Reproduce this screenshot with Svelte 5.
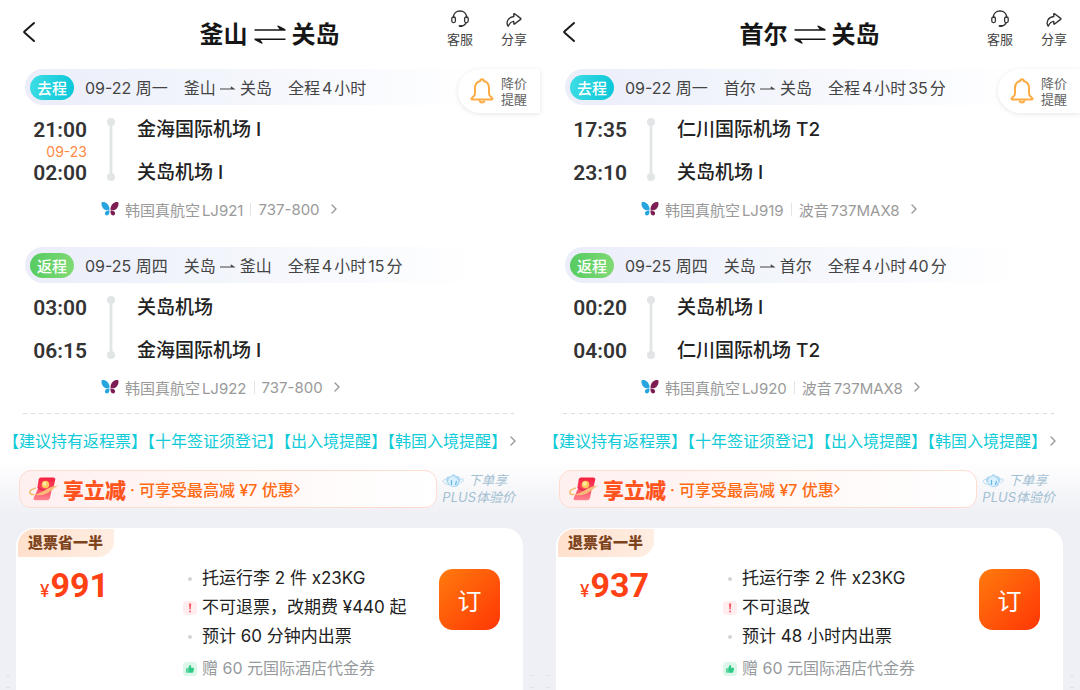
<script>
  const panels = [
    {
      id: 'pusan',
      from: '釜山',
      to: '关岛',
      legs: [
        { kind: 'out', label: '去程', date: '09-22 周一', from: '釜山', to: '关岛', total: '全程4小时', depart: '21:00', nextDay: '09-23', arrive: '02:00', fromPort: '金海国际机场 I', toPort: '关岛机场 I', flight: '韩国真航空LJ921', plane: '737-800' },
        { kind: 'back', label: '返程', date: '09-25 周四', from: '关岛', to: '釜山', total: '全程4小时15分', depart: '03:00', nextDay: '', arrive: '06:15', fromPort: '关岛机场', toPort: '金海国际机场 I', flight: '韩国真航空LJ922', plane: '737-800' }
      ],
      price: '991',
      rules: ['托运行李 2 件 x23KG', '不可退票，改期费 ¥440 起', '预计 60 分钟内出票']
    },
    {
      id: 'seoul',
      from: '首尔',
      to: '关岛',
      legs: [
        { kind: 'out', label: '去程', date: '09-22 周一', from: '首尔', to: '关岛', total: '全程4小时35分', depart: '17:35', nextDay: '', arrive: '23:10', fromPort: '仁川国际机场 T2', toPort: '关岛机场 I', flight: '韩国真航空LJ919', plane: '波音737MAX8' },
        { kind: 'back', label: '返程', date: '09-25 周四', from: '关岛', to: '首尔', total: '全程4小时40分', depart: '00:20', nextDay: '', arrive: '04:00', fromPort: '关岛机场 I', toPort: '仁川国际机场 T2', flight: '韩国真航空LJ920', plane: '波音737MAX8' }
      ],
      price: '937',
      rules: ['托运行李 2 件 x23KG', '不可退改', '预计 48 小时内出票']
    }
  ];
</script>

{#snippet chevron()}
  <svg class="chevron" viewBox="0 0 6 10" width="6" height="10"><path d="M1 1l4 4-4 4" fill="none" stroke="currentColor" stroke-width="1.4" stroke-linecap="round" stroke-linejoin="round" /></svg>
{/snippet}

<main>
  {#each panels as p (p.id)}
    <section class="panel">
      <header>
        <button class="back" aria-label="返回">
          <svg viewBox="0 0 14 22" width="14" height="22"><path d="M12 2L2.4 10.6q-.5.4 0 .8L12 20" fill="none" stroke="#1c1c1c" stroke-width="2" stroke-linecap="round" stroke-linejoin="round" /></svg>
        </button>
        <h1>
          <span>{p.from}</span>
          <svg viewBox="0 0 32 20" width="32" height="20" fill="#161616"><path d="M.5 4.300h25L23 .8h1.800l6.700 3.500v1.400H.5zM31.500 13.500H.5v1.400l6.700 3.500H9l-2.500-3.500h25z" /></svg>
          <span>{p.to}</span>
        </h1>
        <nav>
          <button class="tool">
            <svg viewBox="0 0 18 18" width="18" height="18" fill="none" stroke="#333" stroke-width="1.3" stroke-linecap="round">
              <path d="M2.400 7.500C2.400 3.500 5.200 1 9 1s6.600 2.500 6.600 6.500M15 12.800c-.7 2-2.400 3-4.300 3.200" />
              <rect x=".8" y="7" width="3.600" height="5.600" rx="1.500" />
              <rect x="13.600" y="7" width="3.600" height="5.600" rx="1.500" />
              <path d="M8.600 16h2" stroke-width="2" />
            </svg>
            <span>客服</span>
          </button>
          <button class="tool">
            <svg viewBox="0 0 18 18" width="18" height="18" fill="none" stroke="#333" stroke-width="1.400" stroke-linejoin="round" stroke-linecap="round">
              <path d="M8.800 4.200q0-.9.8-.4l6 4.600q.6.500 0 1l-6 4.600q-.8.500-.8-.4v-2.200C6 11.600 4.800 13 3.500 15.800q-.4.600-.7 0C.9 12 3 7.200 8.800 6.500z" />
            </svg>
            <span>分享</span>
          </button>
        </nav>
      </header>

      {#each p.legs as leg (leg.kind)}
        <article class="leg">
          <div class="row">
            <div class="band">
              <span class="badge {leg.kind}">{leg.label}</span>
              <span>{leg.date}</span>
              <span class="route">
                {leg.from}
                <svg viewBox="0 0 16 8" width="16" height="8" fill="#444"><path d="M0 5.600h10.800V3.200l4.800 3.400H0z" /></svg>
                {leg.to}
              </span>
              <span>{leg.total}</span>
            </div>
            {#if leg.kind === 'out'}
              <button class="alert">
                <svg viewBox="0 0 24 26" width="24" height="26" fill="none" stroke="#ffab45" stroke-width="2" stroke-linecap="round" stroke-linejoin="round">
                  <path d="M10.300 3q0-1.800 1.700-1.800T13.700 3c3.400.8 5.300 3.600 5.300 7v5.500c0 2 1.300 2.800 3 4.300q1.300 1.700-.6 1.700H2.600q-1.900 0-.6-1.700c1.700-1.500 3-2.300 3-4.300V10c0-3.400 1.900-6.200 5.300-7z" />
                  <path d="M9.700 23.300q2.300 2.400 4.600 0" />
                </svg>
                <span>降价<br />提醒</span>
              </button>
            {/if}
          </div>

          <div class="times">
            <time>{leg.depart}</time>
            <svg class="track" viewBox="0 0 8 63" width="8" height="63" fill="#e1e5e6"><circle cx="4" cy="4" r="4" /><circle cx="4" cy="59" r="4" /><path d="M2.600 4h2.800v55H2.600z" /></svg>
            <b class="first">{leg.fromPort}</b>
            {#if leg.nextDay}<small>{leg.nextDay}</small>{/if}
            <time class="arrive">{leg.arrive}</time>
            <b class="last">{leg.toPort}</b>
          </div>

          <a class="flight" href="#{p.id}-{leg.kind}">
            <svg viewBox="0 0 18 16" width="18" height="16">
              <path d="M.6 1.400C3.600.4 7.600 2 8.600 8.200 7.800 9.600 4.500 9.800 2.700 8 .9 6.200.1 3.600.6 1.400z" fill="#28a4df" />
              <path d="M8.400 9.200c.4 2.800-.5 5.300-2.700 5.200-1.700-.2-2.300-2-1.400-3.400.8-1.200 2.400-1.300 4.100-1.800z" fill="#28a4df" />
              <path d="M17.400 1.400c-3-1-7 .6-8 6.800.8 1.400 4.100 1.600 5.900-.2 1.800-1.800 2.600-4.400 2.100-6.600z" fill="#7c1d54" />
              <path d="M9.600 9.200c-.4 2.800.5 5.300 2.700 5.200 1.700-.2 2.300-2 1.400-3.400-.8-1.200-2.400-1.300-4.100-1.800z" fill="#7c1d54" />
            </svg>
            <span>{leg.flight}</span>
            <i></i>
            <span>{leg.plane}</span>
            {@render chevron()}
          </a>
        </article>
      {/each}

      <svg class="dashes" width="100%" height="1"><line x1="0" y1="0.5" x2="100%" y2="0.5" stroke="#d9dbdd" stroke-dasharray="4 4" /></svg>

      <a class="notice" href="#{p.id}-notice">
        <span>【建议持有返程票】【十年签证须登记】【出入境提醒】【韩国入境提醒】</span>
        {@render chevron()}
      </a>

      <div class="lower">
        <div class="offers">
          <button class="promo">
            <svg viewBox="0 0 32 26" width="32" height="26">
              <defs>
                <linearGradient id="env-{p.id}" x1="0" y1="0" x2="0" y2="1"><stop offset="0" stop-color="#f5203c" /><stop offset=".5" stop-color="#fa4661" /><stop offset="1" stop-color="#ff8790" /></linearGradient>
              </defs>
              <path d="M8 12C0 14 0 19 6 18.500" fill="none" stroke="#f7bd72" stroke-width="1.600" />
              <path d="M13 1.500h12q2.800 0 2.200 2.500l-1.400 6q-.5 2-2 3l-1.800 9q-.6 2.300-3 2.300H7.500q-3 0-1.600-2.700l4-8.600-.4-2.500 1.200-7q.4-2 2.300-2z" fill="url(#env-{p.id})" />
              <path d="M10 11c2 3 8 4.500 14 2" fill="none" stroke="#e9284b" stroke-width="1.400" />
              <path d="M5 18.500C14 18.500 19 10 31 9.500c-5 1-9 8.500-17 9.500q-5 .8-9-.5z" fill="#f9bc78" />
              <circle cx="17.500" cy="8.500" r="3.800" fill="#ffc65a" /><circle cx="16.700" cy="7.700" r="2" fill="#ffe9a5" />
            </svg>
            <strong>享立减</strong>
            <span>· 可享受最高减 ¥7 优惠</span>
            {@render chevron()}
          </button>
          <button class="plus">
            <span class="line">
              <svg viewBox="0 0 22 14" width="22" height="14">
                <path d="M5 3l4-1 2.500-2L14 2l3 .5 1.500 4L16 12q-4.500 2-8 0L4 7z" fill="#a9d6f2" />
                <path d="M7 4l4.500-2 4 3 1 3-2.500 4H9L6 8z" fill="#d9f0ff" />
                <path d="M9.500 6v5M13.500 11l1-4" fill="none" stroke="#68b5e6" stroke-width="1.200" />
                <path d="M5 5C-1 6 0 9.500 7 10.500M18 5c5-.5 4 2 .5 4" fill="none" stroke="#acd2ea" stroke-width=".9" />
              </svg>
              下单享
            </span>
            <span>PLUS体验价</span>
          </button>
        </div>

        <div class="shelf">
          <i class="marks"></i>
          <article class="card">
            <div class="fare">
              <span class="tag">退票省一半</span>
              <span class="price"><small>¥</small>{p.price}</span>
            </div>
            <ul>
              <li><i class="dot"></i>{p.rules[0]}</li>
              <li><i class="mark warn"><svg viewBox="0 0 14 14" width="14" height="14"><path d="M6 2.500h2.200L7.700 8.500H6.500zM6.200 9.700h1.700v1.600H6.200z" fill="#f7515a" /></svg></i>{p.rules[1]}</li>
              <li><i class="dot"></i>{p.rules[2]}</li>
              <li class="gift"><i class="mark good"><svg viewBox="0 0 14 14" width="14" height="14" fill="#2fca85"><path d="M3.200 6.300h1.500v4.500H3.200zM5.200 6.200L6.700 3q1.700-.2 1.500 1.600l-.2 1.100h2.200q1.100.1.800 1.200l-.8 3q-.3.900-1.200.9H5.200z" /></svg></i>赠 60 元国际酒店代金券</li>
            </ul>
            <button class="book">订</button>
          </article>
          <i class="marks"></i>
        </div>
      </div>
    </section>
  {/each}
</main>

<style>
  :global(body) { margin: 0; background: #fff; }
  main {
    display: grid;
    grid-template-columns: 1fr 1fr;
    min-height: 100vh;
    font-family: Inter, "Noto Sans CJK SC", sans-serif;
    color: #222;
    text-autospace: normal;
    overflow: hidden;
  }
  button { border: 0; padding: 0; background: none; font: inherit; color: inherit; cursor: pointer; }
  a { color: inherit; text-decoration: none; }
  svg { flex: none; display: block; }
  .panel { display: flex; flex-direction: column; min-width: 0; }

  header { display: grid; grid-template-columns: 1fr auto 1fr; align-items: center; height: 69px; padding: 0 13px 0 22px; }
  .back { justify-self: start; padding-bottom: 6px; }
  h1 { display: flex; align-items: center; gap: 6px; margin: 0; padding-right: 10px; font-size: 24px; line-height: 32px; font-weight: 700; color: #161616; }
  nav { display: flex; justify-self: end; gap: 28px; padding-bottom: 10px; }
  .tool { display: flex; flex-direction: column; align-items: center; gap: 1px; font-size: 13px; line-height: 20px; color: #444; }

  .leg { margin-bottom: 25px; }
  .leg + .leg { margin-bottom: 13px; }
  .row { display: grid; height: 36px; }
  .row > * { grid-area: 1 / 1; }
  .band {
    display: flex; align-items: center; gap: 16px; height: 36px; margin: 0 60px 0 25px; padding-left: 5px;
    border-radius: 18px; background: linear-gradient(90deg, #ebeef9, #f6f8fd 60%, #fff);
    font-size: 16px; color: #444; white-space: nowrap;
  }
  .badge { display: grid; place-items: center; width: 44px; height: 25px; margin-right: -5px; border-radius: 13px; color: #fff; font-size: 15px; font-weight: 500; }
  .badge.out { background: linear-gradient(100deg, #3fdde4, #09c6d8); }
  .badge.back { background: linear-gradient(100deg, #55cb60, #82da76); padding: 0; }
  .route { display: flex; align-items: center; gap: 4px; }
  .alert {
    display: flex; align-items: center; gap: 7px; justify-self: end; align-self: start;
    height: 44px; padding: 0 13px 0 12px; border-radius: 22px 0 0 22px; background: #fff;
    box-shadow: 0 1px 5px #0000001a; font-size: 13px; line-height: 16px; color: #666;
  }

  .times { display: grid; grid-template: 24px 19px 24px / 87px 8px 1fr; column-gap: 20px; padding-top: 13px; align-items: center; }
  .times time { grid-column: 1; grid-row: 1; justify-self: end; font: 600 21px/24px Roboto, sans-serif; color: #333; }
  .times .arrive { grid-row: 3; }
  .times small { grid-column: 1; grid-row: 2; justify-self: end; font-size: 14px; line-height: 14px; color: #ff8a45; }
  .track { grid-column: 2; grid-row: 1 / 4; align-self: start; }
  .times b { grid-column: 3; padding-left: 2px; font-size: 19px; line-height: 24px; font-weight: 500; color: #222; }
  .first { grid-row: 1; }
  .last { grid-row: 3; }
  .flight { display: flex; align-items: center; gap: 6px; height: 24px; margin: 12px 0 1px 101px; font-size: 15px; color: #9a9a9a; }
  .flight i { width: 1px; height: 13px; margin: 0 1px; background: #e3e3e3; }
  .chevron { margin-left: 5px; color: #999; }

  .dashes { width: auto; margin: 0 26px 0 23px; }
  .notice { display: flex; align-items: center; padding: 15px 24px 9px 3px; color: #10cbd7; font-size: 16px; line-height: 24px; white-space: nowrap; }
  .notice .chevron { margin-left: auto; }

  .lower { flex: 1; padding-top: 8px; background: linear-gradient(#fff, #eff0f5 52px); }
  .offers { display: flex; align-items: center; gap: 5px; padding: 0 25px 0 19px; }
  .promo {
    display: flex; align-items: center; flex: 1; height: 38px; padding-left: 8px; box-sizing: border-box;
    border: 1px solid #ffdcd0; border-radius: 12px; background: linear-gradient(90deg, #fff0f0, #fff9f8 60%, #fff);
    color: #ff6a12; font-size: 16px; font-weight: 500; white-space: nowrap;
  }
  .promo strong { margin: 0 4px 0 3px; font-size: 21px; font-weight: 900; color: #ff5420; }
  .promo .chevron { margin-left: 0; color: #ff6a12; }
  .plus { display: flex; flex-direction: column; align-items: flex-start; font-size: 13px; line-height: 17px; font-style: italic; color: #a3bfd2; white-space: nowrap; text-autospace: no-autospace; }
  .line { display: flex; align-items: center; gap: 4px; }

  .shelf { display: grid; grid-template-columns: 16px 1fr 17px; margin-top: 20px; }
  .marks { align-self: end; justify-self: center; width: 4px; height: 11px; margin-bottom: 2px; border: solid #dfe2e7; border-width: 1px 0; }
  .card { display: grid; grid-template-columns: 167px 1fr 61px; min-height: 162px; padding-right: 23px; border-radius: 18px 18px 0 0; background: #fff; }
  .fare { display: flex; flex-direction: column; align-items: flex-start; padding: 1px 0 0 2px; }
  .tag { padding: 0 11px 0 10px; border-radius: 16px 0 16px 0; background: linear-gradient(90deg, #ffe0cc, #ffeee3); font-size: 15px; line-height: 28px; font-weight: 900; color: #7c431c; }
  .price { padding: 7px 0 0 22px; font: 700 34px/42px Roboto, sans-serif; color: #ff4114; }
  .price small { margin-right: 1px; font: 500 17px/20px Inter, sans-serif; }
  ul { margin: 0; padding: 36px 0 0; list-style: none; font-size: 17px; line-height: 29px; white-space: nowrap; }
  li { display: flex; align-items: center; }
  .dot { width: 4px; height: 4px; margin: 0 10px 0 5px; border-radius: 2px; background: #d2d5d7; }
  .mark { width: 14px; height: 14px; margin-right: 5px; border-radius: 4px; }
  .warn { background: #ffecee; }
  .good { background: #dcf7ea; }
  .gift { margin-top: 3px; font-size: 16px; color: #969a9c; }
  .book { height: 61px; margin-top: 41px; border-radius: 14px; background: linear-gradient(135deg, #ff7b0d, #ff3605); color: #fff; font-size: 24px; }
</style>
